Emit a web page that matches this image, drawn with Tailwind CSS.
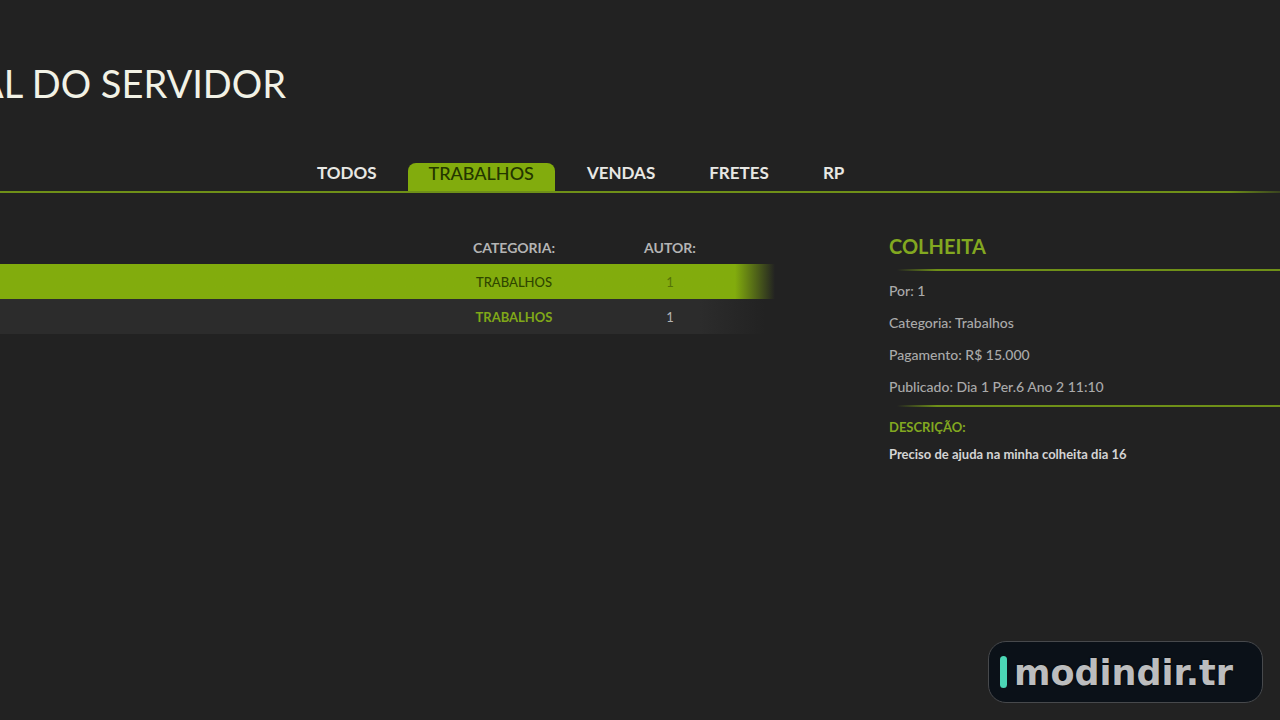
<!DOCTYPE html>
<html lang="pt-BR">
<head>
<meta charset="utf-8">
<meta name="viewport" content="width=device-width, initial-scale=1">
<title>Servidor</title>
<script src="https://cdn.jsdelivr.net/npm/@tailwindcss/browser@4"></script>
</head>
<body class="min-h-screen overflow-x-hidden bg-[#222222] font-['Lato',sans-serif] text-[#b4b4b4]">
<header class="flex h-40 items-start pt-[59px]">
  <h1 class="flex w-[286px] justify-end whitespace-nowrap text-[38px] leading-12 text-[#f2f2e6]">AL DO SERVIDOR</h1>
</header>
<nav class="pt-[3px]" aria-label="Categorias">
  <div class="flex gap-2.5 pl-[296px] text-[17px] leading-5 font-bold text-[#e8e8e4]" role="tablist">
    <button type="button" role="tab" aria-selected="false" class="h-7 px-[21px] pb-2">TODOS</button>
    <button type="button" role="tab" aria-selected="true" class="h-7 rounded-t-lg bg-[#82ac0d] px-[21px] pb-2 text-lg leading-5 font-medium text-[#243600]">TRABALHOS</button>
    <button type="button" role="tab" aria-selected="false" class="h-7 px-[22px] pb-2">VENDAS</button>
    <button type="button" role="tab" aria-selected="false" class="h-7 px-[22px] pb-2">FRETES</button>
    <button type="button" role="tab" aria-selected="false" class="h-7 px-[22px] pb-2">RP</button>
  </div>
  <div class="h-0.5 bg-linear-to-r from-[#6f9018] from-96% to-[#6f9018]/30"></div>
</nav>
<main class="flex items-start pt-[39px]">
  <table class="w-[780px] shrink-0 table-fixed border-collapse text-center text-sm leading-5">
    <colgroup><col class="w-[436px]"><col class="w-[156px]"><col class="w-[156px]"><col></colgroup>
    <thead>
      <tr class="h-8 font-bold"><td></td><th scope="col">CATEGORIA:</th><th scope="col">AUTOR:</th><td></td></tr>
    </thead>
    <tbody>
      <tr class="h-[35px] bg-linear-to-r from-[#82ac0d] from-[735px] to-[#82ac0d]/0 to-[775px] text-[13px] text-[#2f4600]"><td></td><td class="font-medium">TRABALHOS</td><td class="text-[#557308]">1</td><td></td></tr>
      <tr class="h-[35px] bg-linear-to-r from-[#2c2c2c] from-[700px] to-[#2c2c2c]/0 to-[765px] text-[13px]"><td></td><td class="font-bold text-[#80a818]">TRABALHOS</td><td>1</td><td></td></tr>
    </tbody>
  </table>
  <section class="ml-[109px] min-w-0 flex-1 text-sm leading-5">
    <h2 class="text-xl leading-7 font-bold text-[#82a820]">COLHEITA</h2>
    <div class="mt-[9px] ml-2 h-0.5 bg-linear-to-r from-[#6f9018]/0 to-[#6f9018] to-[40px]"></div>
    <div class="flex flex-col gap-3 pt-2.5 pb-2 font-medium text-[#aaaaaa]">
      <p>Por: 1</p>
      <p>Categoria: Trabalhos</p>
      <p>Pagamento: R$ 15.000</p>
      <p>Publicado: Dia 1 Per.6 Ano 2 11:10</p>
    </div>
    <div class="ml-2 h-0.5 bg-linear-to-r from-[#6f9018]/0 to-[#6f9018] to-[40px]"></div>
    <h3 class="pt-2.5 text-[13px] font-bold text-[#82a820]">DESCRIÇÃO:</h3>
    <p class="pt-[7px] text-[13px] font-bold text-[#d4d4d4]">Preciso de ajuda na minha colheita dia 16</p>
  </section>
</main>
<a href="#" class="fixed right-[17px] bottom-[17px] flex h-[62px] w-[275px] items-center gap-[7px] rounded-[18px] border border-[#47494c] bg-[#0b1118] pl-[11px] font-['DejaVu_Sans',sans-serif] text-[35px] leading-10 font-bold text-[#bcbdbe]">
  <span class="h-8 w-[7px] rounded-full bg-[#4bd6b5]"></span>
  <span class="pt-0.5 [text-shadow:0_0_2px_#000]">modindir.tr</span>
</a>
</body>
</html>
